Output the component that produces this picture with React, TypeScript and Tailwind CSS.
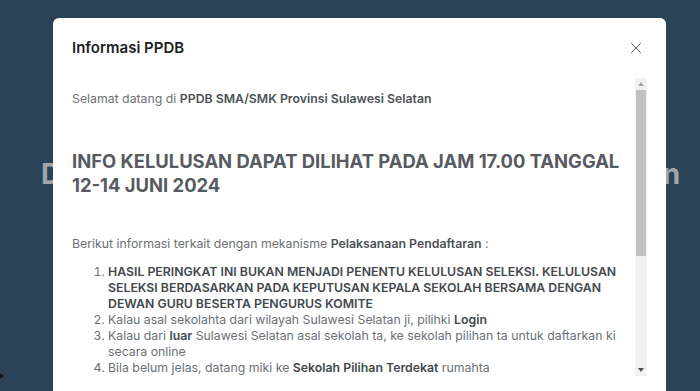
import { X } from "lucide-react";

function FakeScrollbar() {
  return (
    <div className="flex w-[12px] flex-none flex-col bg-[#f1f1f1]">
      <div className="flex h-[12px] items-center justify-center">
        <span className="h-0 w-0 border-x-[3px] border-b-[4px] border-x-transparent border-b-[#a3a3a3]" />
      </div>
      <div className="mx-[1px] h-[166px] bg-[#c1c1c1]" />
      <div className="flex-1" />
      <div className="flex h-[12px] items-center justify-center">
        <span className="h-0 w-0 border-x-[3px] border-t-[4px] border-x-transparent border-t-[#505050]" />
      </div>
    </div>
  );
}

export default function App() {
  return (
    <div className="relative h-[391px] w-[700px] overflow-hidden bg-[#2b4356] font-['Inter','Noto_Sans',sans-serif]">
      <div className="flex justify-center pl-[21px] pt-[153px]">
        <h1 className="whitespace-nowrap text-[28px] font-bold text-[#a0a6ac]">
          Daftar Ulang PPDB SMA/SMK Sulawesi Selatan
        </h1>
      </div>
      <span className="absolute bottom-[12px] left-0 h-0 w-0 border-y-[3px] border-l-[4px] border-y-transparent border-l-[#111]" />

      <div className="absolute left-[53px] top-[18px] w-[613px] rounded-[6px] bg-white">
        <div className="flex items-center justify-between px-[19px] pt-[19px] pb-[19px]">
          <h5 className="text-[15px] font-semibold leading-[22px] text-[#1c1f23]">Informasi PPDB</h5>
          <X className="mr-[2px] h-[18px] w-[18px] text-[#555]" strokeWidth={1.3} />
        </div>
        <div className="mx-[19px] flex h-[298px] gap-[6px]">
          <div className="flex-1 overflow-hidden pt-[13px] text-[12.3px] leading-[16px] text-[#6c7075]">
            <p>
              Selamat datang di <b className="font-semibold text-[#4d5257]">PPDB SMA/SMK Provinsi Sulawesi Selatan</b>
            </p>
            <h2 className="mt-[42px] text-[18.4px] font-bold leading-[24px] text-[#575b61]">
              INFO KELULUSAN DAPAT DILIHAT PADA JAM 17.00 TANGGAL 12-14 JUNI 2024
            </h2>
            <p className="mt-[39px]">
              Berikut informasi terkait dengan mekanisme{" "}
              <b className="font-semibold text-[#4d5257]">Pelaksanaan Pendaftaran</b> :
            </p>
            <ol className="mt-[12px] list-decimal pl-[36px]">
              <li>
                <b className="font-semibold text-[#43484d]">
                  HASIL PERINGKAT INI BUKAN MENJADI PENENTU KELULUSAN SELEKSI. KELULUSAN SELEKSI BERDASARKAN PADA
                  KEPUTUSAN KEPALA SEKOLAH BERSAMA DENGAN DEWAN GURU BESERTA PENGURUS KOMITE
                </b>
              </li>
              <li>
                Kalau asal sekolahta dari wilayah Sulawesi Selatan ji, pilihki{" "}
                <b className="font-semibold text-[#43484d]">Login</b>
              </li>
              <li>
                Kalau dari <b className="font-semibold text-[#43484d]">luar</b> Sulawesi Selatan asal sekolah ta, ke
                sekolah pilihan ta untuk daftarkan ki secara online
              </li>
              <li>
                Bila belum jelas, datang miki ke{" "}
                <b className="font-semibold text-[#43484d]">Sekolah Pilihan Terdekat</b> rumahta
              </li>
            </ol>
          </div>
          <FakeScrollbar />
        </div>
        <div className="h-[20px]" />
      </div>
    </div>
  );
}
